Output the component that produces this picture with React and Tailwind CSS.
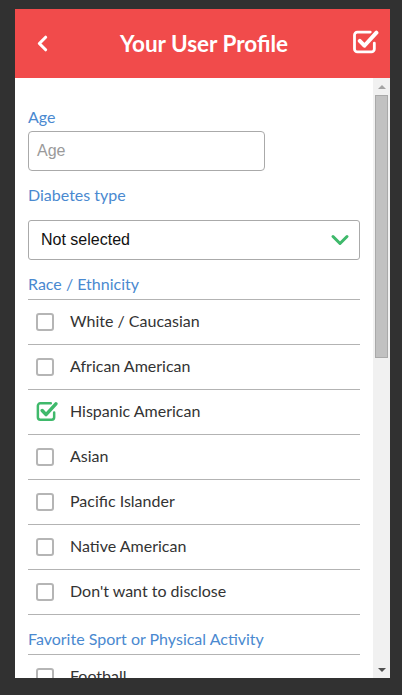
import { ChevronLeft, ChevronDown } from 'lucide-react';

const races = [
  { label: 'White / Caucasian', checked: false },
  { label: 'African American', checked: false },
  { label: 'Hispanic American', checked: true },
  { label: 'Asian', checked: false },
  { label: 'Pacific Islander', checked: false },
  { label: 'Native American', checked: false },
  { label: "Don't want to disclose", checked: false },
];

const sports = ['Football'];

/** Open square with a check that breaks out of the top-right corner */
function CheckSquare({ size = 24, color = '#fff', stroke = 2.6 }) {
  return (
    <svg width={size} height={size} viewBox="0 0 24 24" fill="none">
      <path
        d="M16.5 3.5H5.5a2.5 2.5 0 0 0-2.5 2.5v12a2.5 2.5 0 0 0 2.5 2.5h12a2.5 2.5 0 0 0 2.5-2.5v-5"
        stroke={color}
        strokeWidth={stroke}
        strokeLinecap="round"
      />
      <path
        d="M7.5 11l4 4.2L21.8 4"
        stroke={color}
        strokeWidth={stroke + 1}
        strokeLinecap="round"
        strokeLinejoin="round"
      />
    </svg>
  );
}

function CheckRow({ label, checked }) {
  return (
    <div className="flex items-center h-[45px] border-b border-[#b3b3b3]">
      <div className="w-[42px] pl-[8px] flex items-center">
        {checked ? (
          <div className="-mt-[2px] -ml-[1px]">
            <CheckSquare size={23} color="#3fb96b" stroke={2.6} />
          </div>
        ) : (
          <div className="w-[18px] h-[18px] rounded-[3px] border-2 border-[#b5b5b5]" />
        )}
      </div>
      <span className="text-[16px] leading-[20px] -mt-[2px] text-[#333]">{label}</span>
    </div>
  );
}

function Label({ children, line }) {
  return (
    <div
      className={`text-[16px] leading-[20px] text-[#4a89d0] ${
        line ? 'pb-[5px] border-b border-[#b3b3b3]' : ''
      }`}
    >
      {children}
    </div>
  );
}

export default function App() {
  return (
    <div className="w-[402px] h-[695px] bg-[#313131] pt-[9px] pl-[15px] pr-[12px] pb-[17px] font-['Lato',sans-serif]">
      <div className="h-full bg-white flex flex-col">
        {/* Header */}
        <div className="h-[69px] bg-[#f14b4b] flex items-center justify-between pl-[15px] pr-[11px] text-white">
          <ChevronLeft size={25} strokeWidth={3} />
          <h1 className="text-[22.5px] font-bold ml-[2px]">Your User Profile</h1>
          <div className="-mt-[3px]">
            <CheckSquare size={28} stroke={2.4} />
          </div>
        </div>

        {/* Body + scrollbar */}
        <div className="flex-1 flex overflow-hidden">
          <div className="flex-1 px-[13px] pt-[29px] overflow-hidden">
            <Label>Age</Label>
            <div className="mt-[4px] w-[237px] h-[40px] rounded-[4px] border border-[#aaaaaa] flex items-center px-[8px] font-['Liberation_Sans',sans-serif] text-[16px] text-[#9a9a9a]">
              Age
            </div>

            <div className="mt-[14px]">
              <Label>Diabetes type</Label>
            </div>
            <div className="mt-[15px] h-[40px] rounded-[3px] border border-[#aaaaaa] flex items-center justify-between pl-[12px] pr-[5px] font-['Liberation_Sans',sans-serif] text-[16px] text-[#111]">
              <span>Not selected</span>
              <ChevronDown size={28} strokeWidth={2.6} color="#3fb96b" />
            </div>

            <div className="mt-[14px]">
              <Label line>Race / Ethnicity</Label>
            </div>
            {races.map((r) => (
              <CheckRow key={r.label} label={r.label} checked={r.checked} />
            ))}

            <div className="mt-[14px]">
              <Label line>Favorite Sport or Physical Activity</Label>
            </div>
            {sports.map((s) => (
              <CheckRow key={s} label={s} checked={false} />
            ))}
          </div>

          {/* Scrollbar */}
          <div className="w-[17px] bg-[#f1f1f1] flex flex-col items-center">
            <div className="h-[17px] flex items-center justify-center">
              <div className="w-0 h-0 border-l-[4px] border-r-[4px] border-b-[4px] border-l-transparent border-r-transparent border-b-[#a3a3a3]" />
            </div>
            <div className="w-[13px] h-[263px] bg-[#c1c1c1] border border-[#a9a9a9]" />
            <div className="flex-1" />
            <div className="h-[17px] flex items-center justify-center">
              <div className="w-0 h-0 border-l-[4px] border-r-[4px] border-t-[4px] border-l-transparent border-r-transparent border-t-[#505050]" />
            </div>
          </div>
        </div>
      </div>
    </div>
  );
}
